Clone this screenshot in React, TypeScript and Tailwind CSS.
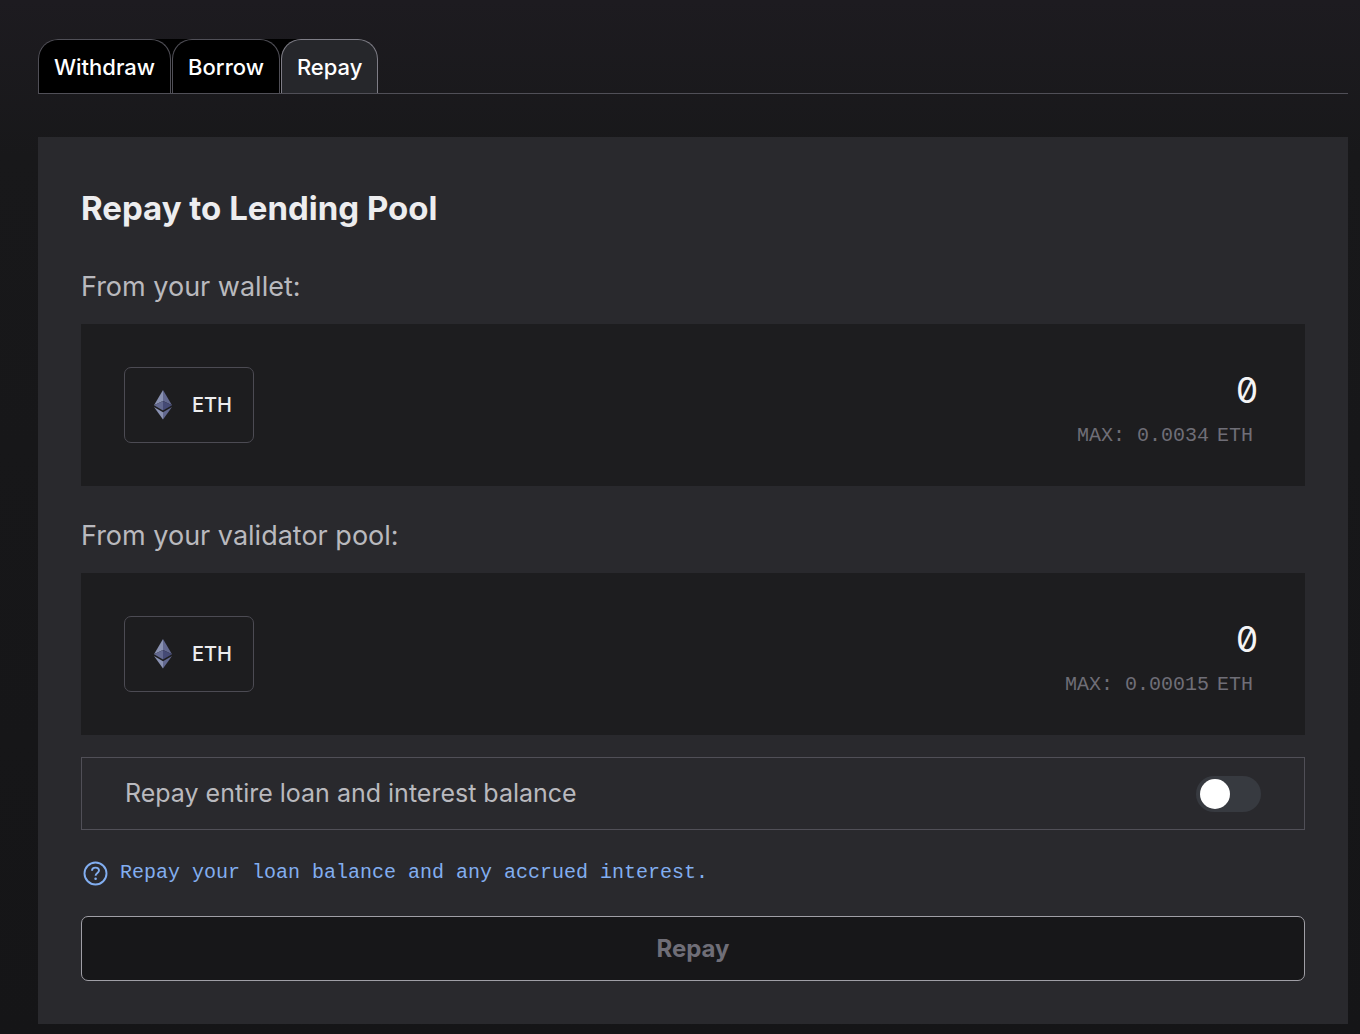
import { useState } from "react";

const tabs = ["Withdraw", "Borrow", "Repay"];

function EthLogo() {
  return (
    <svg width="18" height="30" viewBox="0 0 18 30" aria-hidden="true">
      <path d="M9 0 0 15.2 9 10.9z" fill="#8a92b2" />
      <path d="M9 0v10.9l9 4.3z" fill="#62688f" />
      <path d="M0 15.2 9 20.5v-9.6z" fill="#62688f" />
      <path d="M9 10.9v9.6l9-5.3z" fill="#454a75" />
      <path d="M0 17 9 29.5v-7.2z" fill="#8a92b2" />
      <path d="M9 22.3v7.2L18 17z" fill="#62688f" />
    </svg>
  );
}

interface AmountBoxProps {
  id: string;
  label: string;
  max: string;
}

function AmountBox({ id, label, max }: AmountBoxProps) {
  const [amount, setAmount] = useState("0");

  return (
    <div>
      <label htmlFor={id} className="block text-[27px] leading-[36px] text-[#b9b9be]">
        {label}
      </label>
      <div className="mt-[19px] flex items-center justify-between bg-[#1d1d1f] px-[43px] py-10">
        <button
          type="button"
          className="flex h-[76px] items-center gap-5 rounded-[7px] border border-[#4c4b53] pl-[29px] pr-[21px] text-[20px] font-medium text-[#ededef]"
        >
          <EthLogo />
          ETH
        </button>
        <div className="flex min-w-0 flex-1 flex-col">
          <input
            id={id}
            type="text"
            inputMode="decimal"
            value={amount}
            onChange={e => setAmount(e.target.value)}
            className="h-[52px] w-full bg-transparent pr-1 text-right text-[35px] text-[#f4f4f5] slashed-zero outline-none"
          />
          <div className="mt-[10px] flex justify-end gap-2 pr-[9px] font-['Liberation_Mono',monospace] text-[20px] leading-[20px] text-[#6f6e77]">
            <span>MAX: {max}</span>
            <span>ETH</span>
          </div>
        </div>
      </div>
    </div>
  );
}

export default function App() {
  const [activeTab, setActiveTab] = useState("Repay");
  const [repayAll, setRepayAll] = useState(false);

  return (
    <div className="min-h-screen bg-linear-to-b from-[#1d1b20] via-[#18181a] via-15% to-[#151517] pt-[39px] pr-3 pb-[10px] pl-[38px] font-['Inter',sans-serif]">
      <div className="flex border-b border-[#504f57]">
        <div role="tablist" className="flex gap-px rounded-t-[20px] bg-black">
          {tabs.map(tab => (
            <button
              key={tab}
              type="button"
              role="tab"
              aria-selected={activeTab === tab}
              onClick={() => setActiveTab(tab)}
              className={`h-[54px] rounded-t-[20px] border border-b-0 px-[15px] pt-[2px] text-[22px] font-medium text-white ${
                activeTab === tab ? "border-[#7e7d86] bg-[#26272b]" : "border-[#504f57] bg-black"
              }`}
            >
              {tab}
            </button>
          ))}
        </div>
      </div>

      <form onSubmit={e => e.preventDefault()} className="mt-[43px] bg-[#29292d] p-[43px]">
        <h1 className="mt-1 text-[33px] leading-[48px] font-bold text-[#ededef]">Repay to Lending Pool</h1>

        <div className="mt-[37px] space-y-8">
          <AmountBox id="wallet" label="From your wallet:" max="0.0034" />
          <AmountBox id="validator" label="From your validator pool:" max="0.00015" />
        </div>

        <label className="mt-[22px] flex h-[73px] cursor-pointer items-center justify-between border border-[#504f57] px-[43px] text-[25px] text-[#b9b9be]">
          Repay entire loan and interest balance
          <input
            type="checkbox"
            role="switch"
            checked={repayAll}
            onChange={e => setRepayAll(e.target.checked)}
            className="h-9 w-[65px] shrink-0 cursor-pointer appearance-none rounded-full bg-[#373a40] p-[3px] pl-1 before:block before:size-[30px] before:rounded-full before:bg-white checked:bg-[#3e63dd] checked:before:ml-auto"
          />
        </label>

        <p className="mt-7 flex items-center gap-3 pl-[2px] font-['Liberation_Mono',monospace] text-[20px] leading-[30px] text-[#82aef0]">
          <svg width="25" height="25" viewBox="0 0 25 25" fill="none" stroke="currentColor" strokeWidth="1.9" aria-hidden="true">
            <circle cx="12.5" cy="12.5" r="11" />
            <path d="M9 9.8c0-2 1.5-3.2 3.5-3.2s3.5 1.2 3.5 3c0 2.4-3.4 2.4-3.4 5.2" />
            <circle cx="12.6" cy="17.7" r="1.3" fill="currentColor" stroke="none" />
          </svg>
          Repay your loan balance and any accrued interest.
        </p>

        <button
          type="submit"
          disabled
          className="mt-7 h-[65px] w-full rounded-[7px] border border-[#a09fa6] bg-[#171719] text-[24px] font-bold text-[#6f6e77]"
        >
          Repay
        </button>
      </form>
    </div>
  );
}
